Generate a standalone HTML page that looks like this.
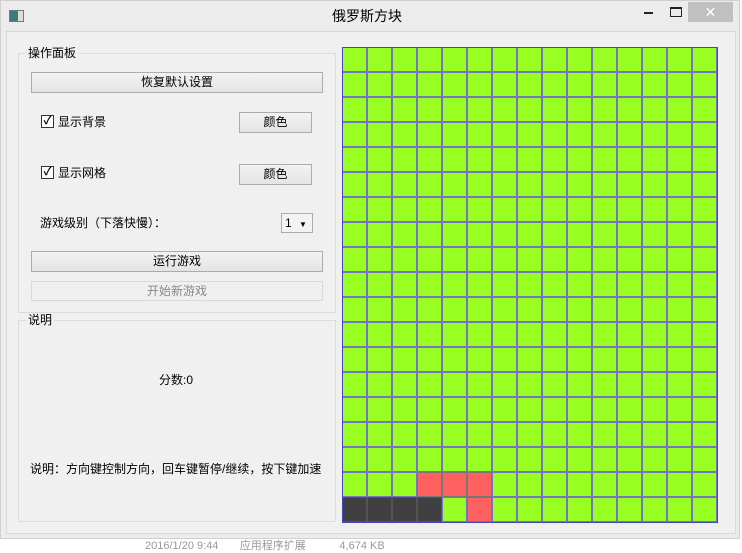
<!DOCTYPE html>
<html><head><meta charset="utf-8"><style>
body{margin:0;width:742px;height:544px;background:#fff;overflow:hidden;font-family:"Liberation Sans","Noto Sans CJK SC",sans-serif;font-size:12px;color:#000;position:relative}
.a{position:absolute}
.win{left:0;top:0;width:740px;height:539px;background:#ececec;border:1px solid #d0d0d0;box-sizing:border-box}
.inner{left:6px;top:31px;width:730px;height:503px;background:#f0f0f0;border:1px solid #d8d8d8;box-sizing:border-box}
.grp{border:1px solid #dcdcdc;box-sizing:border-box}
.gt{background:#f0f0f0;padding:0 2px;font-size:12px;line-height:14px}
.btn{background:linear-gradient(#f2f2f2,#e4e4e4);border:1px solid #acacac;box-sizing:border-box;text-align:center;font-size:12px;line-height:19px}
.dis{background:#f0f0f0;border:1px solid #d9d9d9;color:#888}
.cb{width:13px;height:13px;border:1px solid #333;background:#fff;box-sizing:border-box;font-size:11px;line-height:11px;text-align:center;font-weight:bold}
.t{font-size:12px;line-height:14px;white-space:nowrap}
</style></head><body>
<div class="a win"></div>
<div class="a" style="left:9px;top:10px;width:13px;height:10px;border:1px solid #777;background:linear-gradient(90deg,#3a7a7a 60%,#ddd 60%)"></div>
<div class="a" style="left:332px;top:6px;font-size:14px">俄罗斯方块</div>
<div class="a" style="left:644px;top:12px;width:9px;height:2px;background:#222"></div>
<div class="a" style="left:670px;top:7px;width:10px;height:7px;border:1px solid #222;border-top-width:2px"></div>
<div class="a" style="left:688px;top:2px;width:45px;height:20px;background:#c0c0c0;color:#fff;text-align:center;font-size:14px;line-height:20px">✕</div>
<div class="a inner"></div>
<div class="a grp" style="left:18px;top:53px;width:318px;height:260px"></div>
<div class="a gt" style="left:26px;top:46px">操作面板</div>
<div class="a btn" style="left:31px;top:72px;width:292px;height:21px">恢复默认设置</div>
<div class="a cb" style="left:41px;top:115px">✓</div>
<div class="a t" style="left:58px;top:115px">显示背景</div>
<div class="a btn" style="left:239px;top:112px;width:73px;height:21px">颜色</div>
<div class="a cb" style="left:41px;top:166px">✓</div>
<div class="a t" style="left:58px;top:166px">显示网格</div>
<div class="a btn" style="left:239px;top:164px;width:73px;height:21px">颜色</div>
<div class="a t" style="left:40px;top:216px">游戏级别（下落快慢）：</div>
<div class="a" style="left:281px;top:213px;width:32px;height:20px;border:1px solid #acacac;box-sizing:border-box;background:#f3f3f3;font-size:12px;line-height:18px;padding-left:3px">1 <span style="font-size:8px;margin-left:4px">▼</span></div>
<div class="a btn" style="left:31px;top:251px;width:292px;height:21px">运行游戏</div>
<div class="a btn dis" style="left:31px;top:281px;width:292px;height:20px">开始新游戏</div>
<div class="a grp" style="left:18px;top:320px;width:318px;height:202px"></div>
<div class="a gt" style="left:26px;top:313px">说明</div>
<div class="a t" style="left:159px;top:373px">分数:0</div>
<div class="a t" style="left:30px;top:462px">说明：方向键控制方向，回车键暂停/继续，按下键加速</div>
<svg class="a" style="left:342px;top:47px" width="376" height="476">
<rect x="0" y="0" width="376" height="476" fill="#7575c8"/>
<defs><pattern id="p" width="25" height="25" patternUnits="userSpaceOnUse"><rect x="1" y="1" width="23" height="23" fill="#99ff22"/></pattern></defs>
<rect x="0" y="0" width="376" height="476" fill="url(#p)"/>
<g fill="#ff6060" stroke="#777" stroke-width="1"><rect x="75.5" y="425.5" width="24" height="24"/><rect x="100.5" y="425.5" width="24" height="24"/><rect x="125.5" y="425.5" width="24" height="24"/><rect x="125.5" y="450.5" width="24" height="24"/></g>
<g fill="#404040" stroke="#555" stroke-width="1"><rect x="0.5" y="450.5" width="24" height="24"/><rect x="25.5" y="450.5" width="24" height="24"/><rect x="50.5" y="450.5" width="24" height="24"/><rect x="75.5" y="450.5" width="24" height="24"/></g>
<rect x="0.5" y="0.5" width="375" height="475" fill="none" stroke="#4444bb"/>
</svg>
<div class="a" style="left:145px;top:537px;color:#999;font-size:11px">2016/1/20 9:44 &nbsp; &nbsp; &nbsp; 应用程序扩展 &nbsp; &nbsp; &nbsp; &nbsp; &nbsp; 4,674 KB</div>
</body></html>
